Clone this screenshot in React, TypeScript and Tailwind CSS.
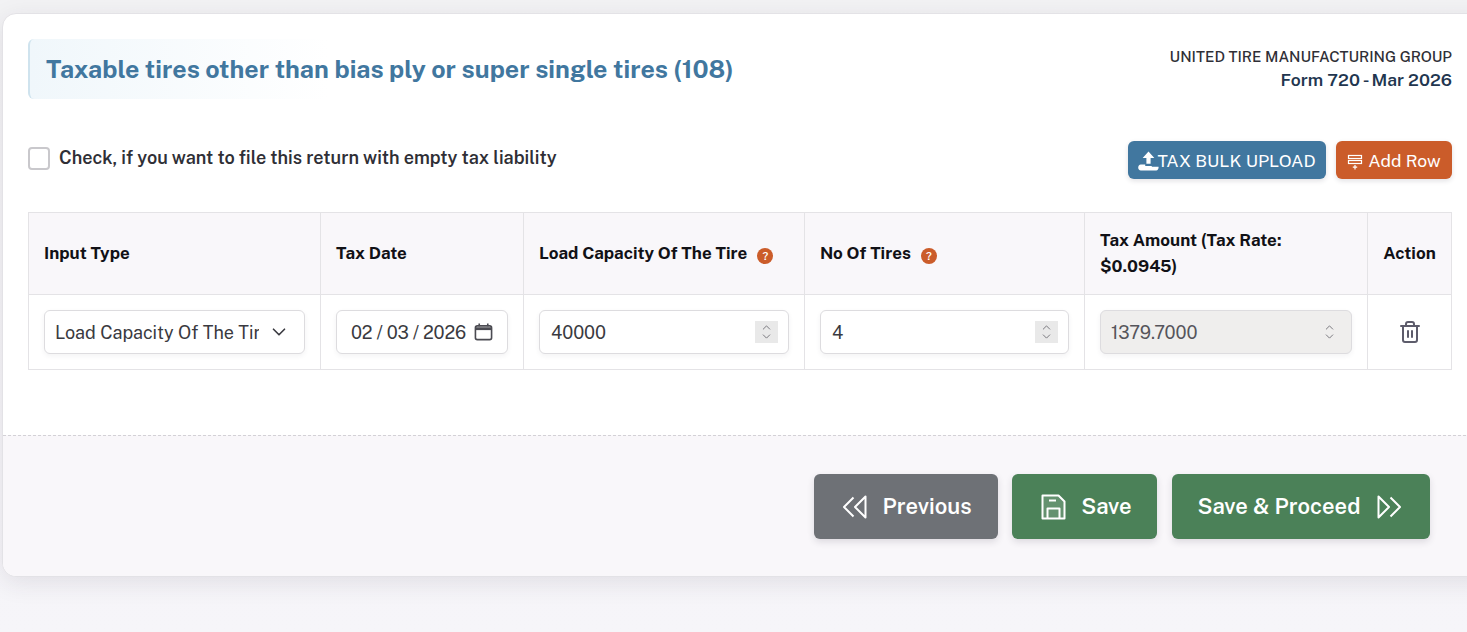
import { ChevronDown, ChevronUp, Trash2 } from "lucide-react";

const cellClass = "border border-[#e4e3e6] px-[15px] align-middle";
const headClass = `${cellClass} bg-[#f9f7fa] pb-[2px] text-[17px] leading-[26px] font-bold text-[#111116]`;
const boxClass =
  "flex h-[44px] items-center justify-between rounded-md border border-[#dddcdf] text-[18px] shadow-[0_2px_5px_rgba(47,43,61,0.06)]";

function HelpDot() {
  return (
    <span className="ml-[10px] inline-flex h-4 w-4 items-center justify-center rounded-full bg-[#cb5c2a] align-[-1px] text-[11px] leading-none font-semibold text-white">
      ?
    </span>
  );
}

function Spinner({ boxed }: { boxed?: boolean }) {
  return (
    <span
      className={`flex h-[22px] w-[23px] flex-col items-center justify-center ${
        boxed ? "bg-[#e9e9e9]" : ""
      } text-[#77767c]`}
    >
      <ChevronUp size={15} strokeWidth={1.8} className="-mb-[2px]" />
      <ChevronDown size={15} strokeWidth={1.8} className="-mt-[2px]" />
    </span>
  );
}

function NumberBox({ value }: { value: string }) {
  return (
    <div className={`${boxClass} bg-white pr-[10px] pl-[11px] text-[#3a3a40]`}>
      <span>{value}</span>
      <Spinner boxed />
    </div>
  );
}

function UploadIcon() {
  return (
    <svg width="21" height="21" viewBox="0 0 18 18" fill="white" className="-mr-[2px]">
      <path d="M9 0.5 14 6H10.8V11H7.2V6H4Z" />
      <path d="M2.5 11.5H6.2V12.8H11.8V13.4H17.6C17.9 14.8 17 16.8 15.6 16.8H2.5C-0.6 16.8 -0.6 11.5 2.5 11.5Z" />
    </svg>
  );
}

function AddRowIcon() {
  return (
    <svg width="16" height="17" viewBox="0 0 16 17" fill="none" stroke="white" strokeWidth="1.2">
      <rect x="1.5" y="2.5" width="13" height="3" />
      <rect x="1.5" y="7.5" width="13" height="3" />
      <path d="M8 12V16.5M5.8 14.2H10.2" />
    </svg>
  );
}

function PrevIcon() {
  return (
    <svg width="24" height="26" viewBox="0 0 24 26" fill="none" stroke="white" strokeWidth="2" strokeLinejoin="round">
      <path d="M10.5 3.5 1 13l9.5 9.5" />
      <path d="M22.5 2.5V23.5L12 13Z" />
    </svg>
  );
}

function NextIcon() {
  return (
    <svg width="24" height="26" viewBox="0 0 24 26" fill="none" stroke="white" strokeWidth="2" strokeLinejoin="round">
      <path d="M13.5 3.5 23 13 13.5 22.5" />
      <path d="M1.5 2.5V23.5L12 13Z" />
    </svg>
  );
}

function SaveIcon() {
  return (
    <svg width="25" height="26" viewBox="0 0 25 26" fill="none" stroke="white" strokeWidth="2" strokeLinejoin="round">
      <path d="M1.5 1.5H17.5L23.5 7.5V24.5H1.5Z" fill="rgba(255,255,255,0.14)" />
      <path d="M8 6.5H15" />
      <path d="M6.5 24.5V14.5H18.5V24.5" />
    </svg>
  );
}

export default function App() {
  return (
    <div
      className="h-screen w-screen overflow-hidden bg-gradient-to-b from-[#f2f2f4] to-[#f6f5f9] pt-[13px] pl-[2px]"
      style={{ fontFamily: "'Public Sans', Inter, 'Liberation Sans', sans-serif" }}
    >
      <div className="w-[1490px] overflow-hidden rounded-l-[14px] border border-[#e3e2e6] bg-white shadow-[0_6px_24px_rgba(47,43,61,0.1)]">
        <div className="h-[421px] w-[1449px] pt-[25px] pl-[25px]">
          <div className="flex items-start justify-between">
            <div className="flex h-[60px] w-[300px] items-center rounded-l-md border-l-2 border-[#cfe3ee] bg-gradient-to-r from-[#f0f7fb] to-white pt-[1px] pl-[16px]">
              <h1 className="text-[25px] font-bold whitespace-nowrap text-[#41779f]">
                Taxable tires other than bias ply or super single tires (108)
              </h1>
            </div>
            <div className="pt-[7px] text-right">
              <div className="text-[15px] leading-[22px] font-medium text-[#2f2f36]">UNITED TIRE MANUFACTURING GROUP</div>
              <div className="text-[17.5px] leading-[24px] font-semibold text-[#22364f]">Form 720 - Mar 2026</div>
            </div>
          </div>

          <div className="mt-[42px] flex items-start justify-between">
            <label className="flex items-center gap-[9px] pt-[5px] text-[18px] leading-[24px] font-semibold text-[#2f2f36]">
              <span className="h-[23px] w-[22px] rounded-[4px] border-2 border-[#c9c8cc] bg-white" />
              Check, if you want to file this return with empty tax liability
            </label>
            <div className="flex gap-[10px]">
              <button className="flex h-[38px] w-[198px] items-center justify-center rounded-md bg-[#41779f] pt-[2px] text-[17.5px] text-white shadow-[0_2px_5px_rgba(47,43,61,0.14)]">
                <UploadIcon />
                TAX BULK UPLOAD
              </button>
              <button className="flex h-[38px] w-[116px] items-center justify-center gap-[5px] rounded-md bg-[#cb5c2a] pt-[2px] text-[17.5px] text-white shadow-[0_2px_5px_rgba(47,43,61,0.14)]">
                <AddRowIcon />
                Add Row
              </button>
            </div>
          </div>

          <table className="mt-[33px] w-[1423px] table-fixed border-collapse">
            <colgroup>
              <col className="w-[292px]" />
              <col className="w-[203px]" />
              <col className="w-[281px]" />
              <col className="w-[280px]" />
              <col className="w-[283px]" />
              <col className="w-[84px]" />
            </colgroup>
            <thead>
              <tr className="h-[82px] text-left">
                <th className={headClass}>Input Type</th>
                <th className={headClass}>Tax Date</th>
                <th className={headClass}>
                  Load Capacity Of The Tire
                  <HelpDot />
                </th>
                <th className={headClass}>
                  No Of Tires
                  <HelpDot />
                </th>
                <th className={headClass}>Tax Amount (Tax Rate: $0.0945)</th>
                <th className={`${headClass} text-center`}>Action</th>
              </tr>
            </thead>
            <tbody>
              <tr className="h-[75px]">
                <td className={cellClass}>
                  <div className={`${boxClass} bg-white pr-[14px] pl-[10px] text-[#3a3a40]`}>
                    <span className="w-[204px] overflow-hidden whitespace-nowrap">Load Capacity Of The Tire</span>
                    <ChevronDown size={22} strokeWidth={1.8} className="text-[#3a3a40]" />
                  </div>
                </td>
                <td className={cellClass}>
                  <div className={`${boxClass} bg-white pr-[14px] pl-[14px] text-[#3a3a40]`}>
                    <span className="tracking-[-0.2px] whitespace-nowrap">02 / 03 / 2026</span>
                    <svg width="19" height="20" viewBox="0 0 20 20" fill="none" stroke="#4b4b52" strokeWidth="1.7">
                      <rect x="1.5" y="3.5" width="17" height="14.5" rx="2" />
                      <path d="M1.5 6.5H18.5" strokeWidth="3" />
                      <path d="M5.5 1V4M14.5 1V4" />
                    </svg>
                  </div>
                </td>
                <td className={cellClass}>
                  <NumberBox value="40000" />
                </td>
                <td className={cellClass}>
                  <NumberBox value="4" />
                </td>
                <td className={cellClass}>
                  <div className={`${boxClass} bg-[#efeeed] pr-[10px] pl-[10px] text-[#55555b]`}>
                    <span>1379.7000</span>
                    <Spinner />
                  </div>
                </td>
                <td className={`${cellClass} text-center`}>
                  <Trash2 size={24} strokeWidth={2} className="mx-auto -mt-[1px] text-[#5d5c6b]" />
                </td>
              </tr>
            </tbody>
          </table>
        </div>

        <div className="h-[141px] border-t border-dashed border-[#d3d1d6] bg-[#f9f7fa]">
          <div className="flex w-[1427px] justify-end gap-[14px] pt-[38px]">
            <button className="flex h-[65px] w-[184px] items-center justify-center gap-[15px] rounded-md bg-[#6e7176] pl-[3px] text-[22px] font-semibold text-white shadow-[0_3px_7px_rgba(47,43,61,0.14)]">
              <PrevIcon />
              Previous
            </button>
            <button className="flex h-[65px] w-[145px] items-center justify-center gap-[15px] rounded-md bg-[#4b8158] pl-[4px] text-[22px] font-semibold text-white shadow-[0_3px_7px_rgba(47,43,61,0.14)]">
              <SaveIcon />
              Save
            </button>
            <button className="ml-[1px] flex h-[65px] w-[258px] items-center justify-center gap-[17px] rounded-md bg-[#4b8158] pr-[3px] text-[22px] font-semibold text-white shadow-[0_3px_7px_rgba(47,43,61,0.14)]">
              Save &amp; Proceed
              <NextIcon />
            </button>
          </div>
        </div>
      </div>
    </div>
  );
}
